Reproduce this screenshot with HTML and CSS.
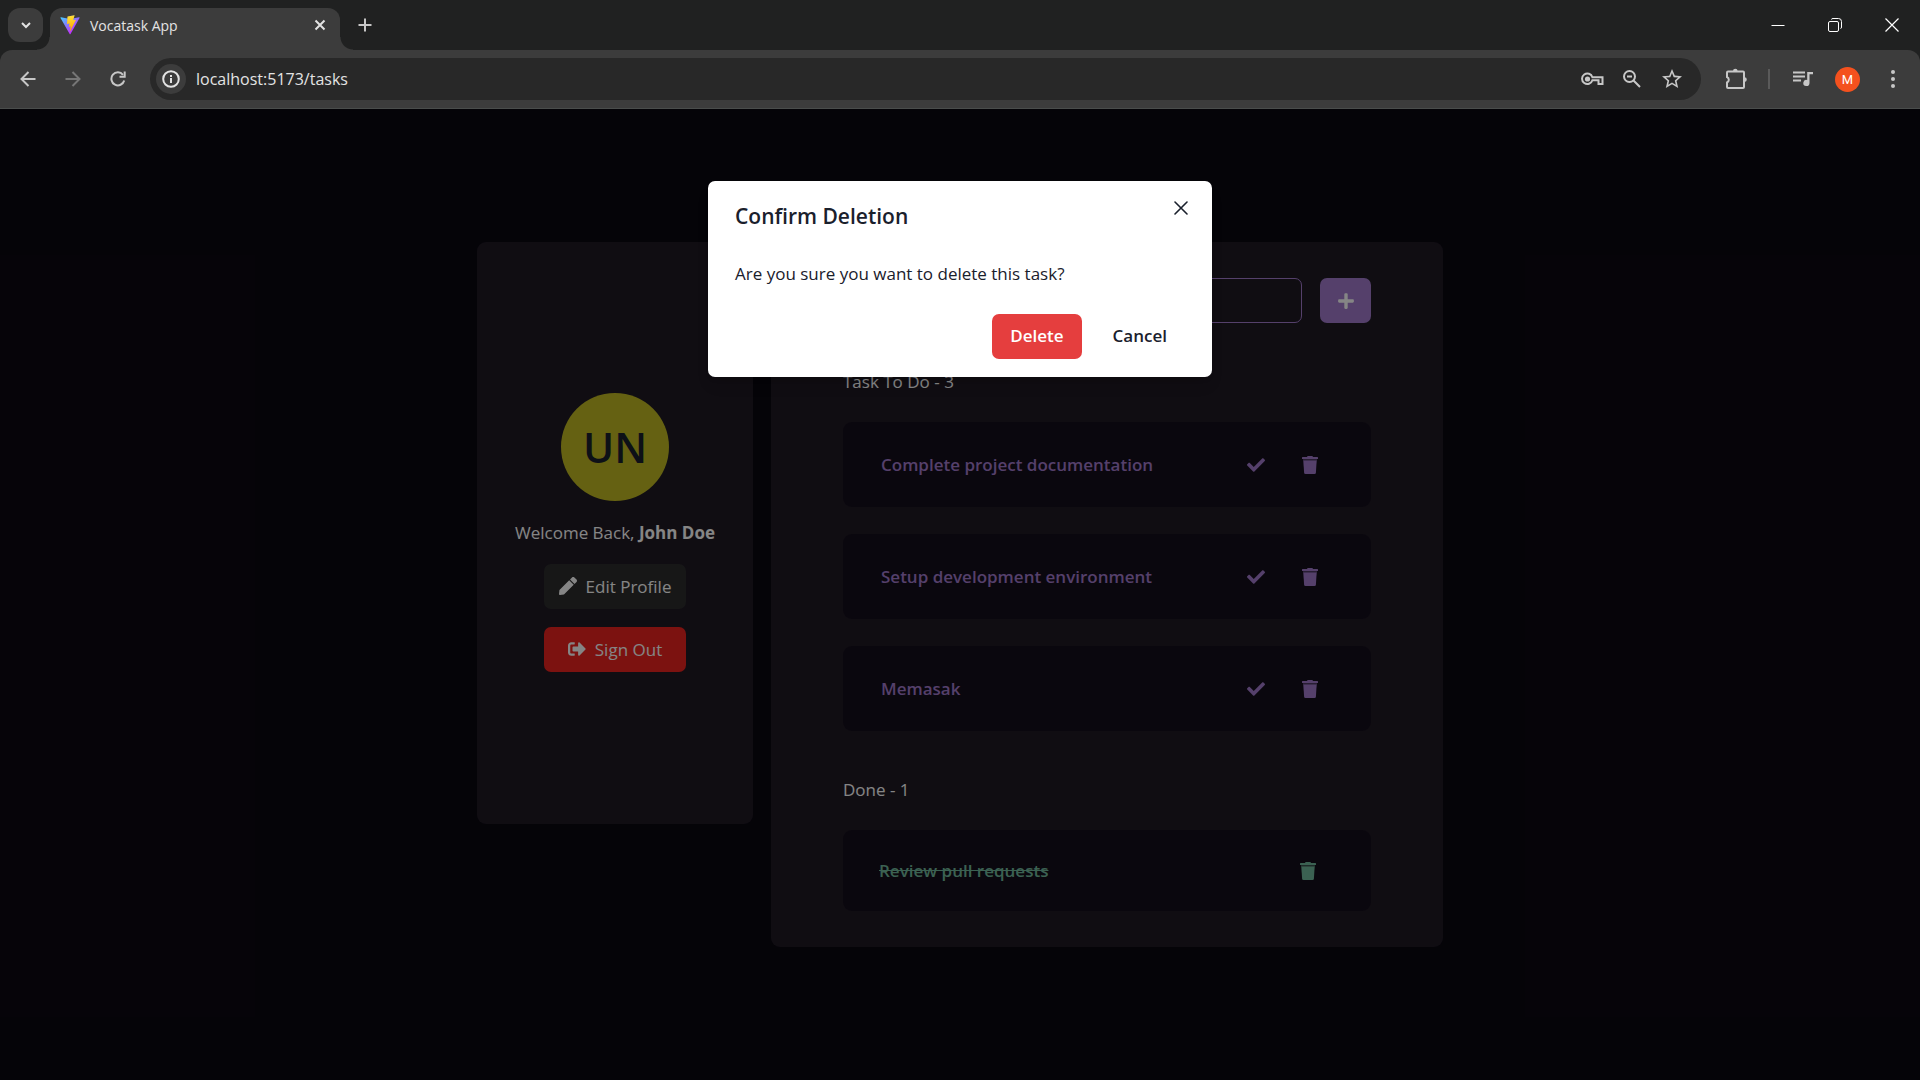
FILE: index.html
```html
<!DOCTYPE html>
<html lang="en">
<head>
<meta charset="utf-8">
<meta name="viewport" content="width=device-width, initial-scale=1">
<title>Vocatask App</title>
<link rel="stylesheet" href="styles.css">
</head>
<body>
<svg class="sprite" aria-hidden="true">
  <symbol id="check" viewBox="0 0 512 512"><path fill="currentColor" d="M173.898 439.404l-166.4-166.4c-9.997-9.997-9.997-26.206 0-36.204l36.203-36.204c9.997-9.998 26.207-9.998 36.204 0L192 312.69 432.095 72.596c9.997-9.997 26.207-9.997 36.204 0l36.203 36.204c9.997 9.997 9.997 26.206 0 36.204l-294.4 294.401c-9.998 9.997-26.207 9.997-36.204-.001z"/></symbol>
  <symbol id="trash" viewBox="0 0 18 18"><path fill="currentColor" d="M1.6 1H6l.6-1h4.8l.6 1h4.400q.6 0 .6.600V3H1V1.600Q1 1 1.600 1z"/><path fill="currentColor" opacity=".4" d="M2 3h14v2H2z"/><path fill="currentColor" d="M2.300 4.500h13.400l-.8 12.200q-.1 1.300-1.400 1.300H4.500q-1.300 0-1.400-1.300z"/></symbol>
</svg>

<header class="browser">
  <div class="tab-strip">
    <button class="tab-search" aria-label="Search tabs"><svg width="12" height="12" viewBox="0 0 12 12"><path d="M2 4l4 4 4-4" fill="none" stroke="currentColor" stroke-width="2"/></svg></button>
    <div class="tab">
      <svg class="favicon" width="20" height="20" viewBox="0 0 410 404"><defs><linearGradient id="va" x1="6" y1="33" x2="235" y2="344" gradientUnits="userSpaceOnUse"><stop stop-color="#41d1ff"/><stop offset="1" stop-color="#bd34fe"/></linearGradient><linearGradient id="vb" x1="194" y1="9" x2="236" y2="293" gradientUnits="userSpaceOnUse"><stop stop-color="#ffea83"/><stop offset=".083" stop-color="#ffdd35"/><stop offset="1" stop-color="#ffa800"/></linearGradient></defs><path fill="url(#va)" d="M399.641 59.525l-183.998 329.020c-3.799 6.793-13.559 6.833-17.415.073L10.582 59.556C6.380 52.190 12.680 43.267 21.028 44.759l184.195 32.923c1.175.21 2.378.208 3.553-.006l180.343-32.870c8.320-1.517 14.649 7.337 10.522 14.719z"/><path fill="url(#vb)" d="M292.965 1.574L156.801 28.255a5 5 0 00-4.030 4.611l-8.376 141.464c-.197 3.332 2.863 5.918 6.115 5.168l37.910-8.749c3.547-.818 6.752 2.306 6.023 5.873l-11.263 55.153c-.758 3.712 2.727 6.886 6.352 5.785l23.415-7.114c3.630-1.102 7.118 2.081 6.350 5.796l-17.899 86.633c-1.120 5.419 6.088 8.374 9.094 3.728l2.008-3.103L323.446 102.080c1.858-3.707-1.346-7.935-5.418-7.150l-39.022 7.532c-3.667.707-6.787-2.708-5.752-6.296l25.469-88.291c1.036-3.594-2.094-7.012-5.758-6.301z"/></svg>
      <span class="tab-title">Vocatask App</span>
      <button class="tab-close" aria-label="Close tab"><svg width="12" height="12" viewBox="0 0 12 12"><path d="M1.500 1.500l9 9M10.500 1.500l-9 9" stroke="currentColor" stroke-width="2"/></svg></button>
    </div>
    <button class="new-tab" aria-label="New tab"><svg width="14" height="14" viewBox="0 0 14 14"><path d="M7 .5v13M.5 7h13" stroke="currentColor" stroke-width="2"/></svg></button>
    <div class="window-controls">
      <button aria-label="Minimize"><svg width="14" height="14" viewBox="0 0 14 14"><path d="M.5 7.500h13" stroke="currentColor"/></svg></button>
      <button aria-label="Restore"><svg width="14" height="14" viewBox="0 0 14 14" fill="none" stroke="currentColor"><rect x=".5" y="3.500" width="10" height="10" rx="1.500"/><path d="M3.500 1.500Q3.500.500 5 .5h5.500q3 0 3 3V9q0 1.500-1 1.500"/></svg></button>
      <button aria-label="Close window"><svg width="14" height="14" viewBox="0 0 14 14"><path d="M.5.5l13 13M13.500.500l-13 13" stroke="currentColor" stroke-width="1.200"/></svg></button>
    </div>
  </div>
  <nav class="toolbar" aria-label="Browser toolbar">
    <button class="tool" aria-label="Back"><svg width="16" height="16" viewBox="0 0 16 16" fill="none" stroke="currentColor" stroke-width="2"><path d="M15.500 8H2M8.500 1L1.500 8l7 7"/></svg></button>
    <button class="tool" aria-label="Forward" disabled><svg width="16" height="16" viewBox="0 0 16 16" fill="none" stroke="currentColor" stroke-width="2"><path d="M.5 8H14M7.500 1l7 7-7 7"/></svg></button>
    <button class="tool" aria-label="Reload"><svg width="16" height="16" viewBox="0 0 16 16"><path d="M14.200 9.500A6.500 6.500 0 1 1 13 3.800" fill="none" stroke="currentColor" stroke-width="2"/><path d="M15.700.5v6.200H9.500v-2h4.200V.5z" fill="currentColor"/></svg></button>
    <div class="address">
      <button class="site-info" aria-label="Site information"><svg width="18" height="18" viewBox="0 0 18 18"><circle cx="9" cy="9" r="7.800" fill="none" stroke="currentColor" stroke-width="2"/><path d="M8 8h2v5H8zM8 5h2v2H8z" fill="currentColor"/></svg></button>
      <input class="url" aria-label="Address" value="localhost:5173/tasks">
      <button class="page-action" aria-label="Passwords"><svg width="24" height="24" viewBox="0 0 24 24"><g fill="none" stroke="currentColor" stroke-width="2"><path d="M12.400 10.200H22.500v6.800h-4v-3.700h-6.100A5.300 5.300 0 1 1 12.400 10.200z"/></g><circle cx="7.500" cy="12" r="2.600" fill="currentColor"/></svg></button>
      <button class="page-action" aria-label="Zoom"><svg width="20" height="20" viewBox="0 0 20 20" fill="none" stroke="currentColor" stroke-width="2"><circle cx="7.500" cy="7.500" r="5.500"/><path d="M11.500 11.500l6.500 6.500M5 7.500h5"/></svg></button>
      <button class="page-action" aria-label="Bookmark this page"><svg width="24" height="24" viewBox="0 0 24 24"><path fill="currentColor" d="M22 9.240l-7.190-.62L12 2 9.190 8.630 2 9.240l5.460 4.730L5.820 21 12 17.270 18.180 21l-1.630-7.030L22 9.240zM12 15.400l-3.760 2.270 1-4.280-3.320-2.880 4.380-.38L12 6.100l1.710 4.040 4.380.38-3.320 2.880 1 4.280L12 15.400z"/></svg></button>
    </div>
    <button class="tool" aria-label="Extensions"><svg width="22" height="22" viewBox="0 0 22 22"><path d="M2 4.500Q2 3.500 3 3.500h15q1 0 1 1V19q0 1-1 1H3q-1 0-1-1v-4.500a3 3 0 0 0 0-5.500z" fill="none" stroke="currentColor" stroke-width="2"/><path d="M8 3a2.300 2.300 0 0 1 4.600 0zM19.500 9.300a2.300 2.300 0 0 1 0 4.600z" fill="currentColor"/></svg></button>
    <span class="divider"></span>
    <button class="tool" aria-label="Media controls"><svg width="20" height="16" viewBox="0 0 20 16"><path d="M0 1h12M0 5h12M0 9h8" transform="translate(0 .5)" stroke="currentColor" stroke-width="2"/><path d="M14.200 1H20v2.200h-3.500V12a3.100 3.100 0 1 1-2.300-3z" fill="currentColor"/></svg></button>
    <button class="profile" aria-label="Profile">M</button>
    <button class="tool" aria-label="Menu"><svg width="4" height="18" viewBox="0 0 4 18" fill="currentColor"><circle cx="2" cy="2" r="2"/><circle cx="2" cy="9" r="2"/><circle cx="2" cy="16" r="2"/></svg></button>
  </nav>
</header>

<div class="viewport">
  <div class="app">
    <aside class="profile-card">
      <div class="avatar">UN</div>
      <p>Welcome Back, <strong>John Doe</strong></p>
      <button class="btn edit"><svg width="18" height="18" viewBox="0 0 512 512"><path fill="currentColor" d="M290.740 93.240l128.020 128.020-277.990 277.990-114.140 12.600C11.350 513.540-1.560 500.620.14 485.340l12.700-114.220 277.900-277.880zm207.200-19.060l-60.110-60.110c-18.750-18.750-49.160-18.750-67.910 0l-56.550 56.550 128.020 128.020 56.550-56.550c18.750-18.760 18.750-49.160 0-67.910z"/></svg>Edit Profile</button>
      <button class="btn sign-out"><svg width="18" height="18" viewBox="0 0 512 512"><path fill="currentColor" d="M497 273L329 441c-15 15-41 4.500-41-17v-96H152c-13.300 0-24-10.700-24-24v-96c0-13.300 10.700-24 24-24h136V88c0-21.400 25.900-32 41-17l168 168c9.300 9.400 9.300 24.600 0 34zM192 436v-40c0-6.600-5.400-12-12-12H96c-17.700 0-32-14.300-32-32V160c0-17.700 14.300-32 32-32h84c6.600 0 12-5.400 12-12V76c0-6.600-5.400-12-12-12H96c-53 0-96 43-96 96v192c0 53 43 96 96 96h84c6.600 0 12-5.400 12-12z"/></svg>Sign Out</button>
    </aside>

    <main class="tasks">
      <form class="new-task">
        <input aria-label="New task">
        <button type="button" class="btn add" aria-label="Add task"><svg width="16" height="18" viewBox="0 0 448 512"><path fill="currentColor" d="M416 208H272V64c0-17.670-14.330-32-32-32h-32c-17.670 0-32 14.330-32 32v144H32c-17.670 0-32 14.330-32 32v32c0 17.670 14.330 32 32 32h144v144c0 17.670 14.330 32 32 32h32c17.670 0 32-14.330 32-32V304h144c17.670 0 32-14.330 32-32v-32c0-17.670-14.330-32-32-32z"/></svg></button>
      </form>
      <section class="group">
        <h2>Task To Do - 3</h2>
        <ul>
          <li class="task"><span>Complete project documentation</span><button aria-label="Mark done"><svg width="18" height="18"><use href="#check"/></svg></button><button aria-label="Delete task"><svg width="18" height="18"><use href="#trash"/></svg></button></li>
          <li class="task"><span>Setup development environment</span><button aria-label="Mark done"><svg width="18" height="18"><use href="#check"/></svg></button><button aria-label="Delete task"><svg width="18" height="18"><use href="#trash"/></svg></button></li>
          <li class="task"><span>Memasak</span><button aria-label="Mark done"><svg width="18" height="18"><use href="#check"/></svg></button><button aria-label="Delete task"><svg width="18" height="18"><use href="#trash"/></svg></button></li>
        </ul>
      </section>
      <section class="group">
        <h2>Done - 1</h2>
        <ul>
          <li class="task done"><span>Review pull requests</span><button aria-label="Delete task"><svg width="18" height="18"><use href="#trash"/></svg></button></li>
        </ul>
      </section>
    </main>
  </div>

  <div class="overlay">
    <div class="modal" role="alertdialog" aria-modal="true" aria-labelledby="modal-title">
      <h1 id="modal-title">Confirm Deletion</h1>
      <button class="modal-close" aria-label="Close"><svg width="14" height="14" viewBox="0 0 14 14"><path d="M1 1l12 12M13 1L1 13" stroke="currentColor" stroke-width="1.600" stroke-linecap="round"/></svg></button>
      <p>Are you sure you want to delete this task?</p>
      <footer>
        <button class="btn danger">Delete</button>
        <button class="btn ghost">Cancel</button>
      </footer>
    </div>
  </div>
</div>
</body>
</html>
```
FILE: styles.css
```css
* { box-sizing: border-box; }

body {
  margin: 0;
  min-height: 100vh;
  display: flex;
  flex-direction: column;
  background: #0b0811;
  color: #fff;
  font: 17px/27px "Open Sans", "Noto Sans", sans-serif;
}

h1, h2, p, ul { margin: 0; padding: 0; }
ul { list-style: none; }

button, input {
  font: inherit;
  color: inherit;
  background: none;
  border: 0;
  padding: 0;
}

button {
  display: flex;
  align-items: center;
  justify-content: center;
  flex: none;
}

svg { display: block; flex: none; }
.sprite { position: absolute; width: 0; height: 0; }

/* Browser frame */
.browser {
  background: #202121;
  border-bottom: 1px solid #4a4d4c;
  color: #c7c7c7;
}

.tab-strip {
  display: flex;
  height: 50px;
  padding: 8px 0 0 8px;
}

.tab-search {
  width: 35px;
  height: 34px;
  border-radius: 12px;
  background: #3c3c3c;
  color: #e3e3e3;
}

.tab {
  position: relative;
  display: flex;
  align-items: center;
  gap: 10px;
  width: 290px;
  margin-left: 7px;
  padding: 0 12px 8px 10px;
  border-radius: 12px 12px 0 0;
  background: #3c3c3c;
  color: #e3e3e3;
}

.tab::before, .tab::after {
  content: "";
  position: absolute;
  bottom: 0;
  width: 13px;
  height: 13px;
}

.tab::before { right: 100%; background: radial-gradient(circle at 0 0, transparent 12px, #3c3c3c 13px); }
.tab::after { left: 100%; background: radial-gradient(circle at 100% 0, transparent 12px, #3c3c3c 13px); }

.tab-title { flex: 1; font-size: 14px; }
.tab-close { width: 16px; height: 16px; }
.new-tab { width: 34px; height: 34px; margin-left: 8px; }

.window-controls {
  display: flex;
  margin: -8px 0 0 auto;
  color: #fff;
}

.window-controls button { width: 57px; }

.toolbar {
  display: flex;
  align-items: center;
  height: 58px;
  padding: 0 5px;
  border-radius: 12px 12px 0 0;
  background: #3c3c3c;
}

.tool { width: 45px; height: 42px; }
.tool:disabled { color: #767676; }

.address {
  flex: 1;
  display: flex;
  align-items: center;
  height: 42px;
  margin: 0 12px 0 10px;
  padding: 0 9px 0 6px;
  border-radius: 21px;
  background: #282828;
}

.site-info {
  width: 30px;
  height: 30px;
  border-radius: 50%;
  background: #3c3c3c;
  color: #e3e3e3;
}

.url {
  flex: 1;
  min-width: 0;
  margin-left: 10px;
  color: #e3e3e3;
  font-size: 16px;
}

.page-action { width: 40px; }

.divider {
  width: 2px;
  height: 20px;
  margin: 0 10px;
  background: #5a5a5a;
}

.profile {
  width: 25px;
  height: 25px;
  margin: 0 10px;
  border-radius: 50%;
  background: #f4511e;
  color: #fff;
  font: 13px/25px Roboto, sans-serif;
}

/* Application */
.viewport {
  position: relative;
  flex: 1;
  padding: 133px 24px;
  border-bottom: 2px solid #000;
}

.app {
  display: flex;
  align-items: flex-start;
  justify-content: center;
  gap: 18px;
}

.profile-card, .tasks {
  border-radius: 9px;
  background: #1f1924;
}

.profile-card {
  display: flex;
  flex-direction: column;
  align-items: center;
  justify-content: center;
  gap: 18px;
  flex: 0 0 276px;
  min-height: 582px;
  padding-bottom: 2px;
}

.avatar {
  display: grid;
  place-items: center;
  width: 108px;
  height: 108px;
  border-radius: 50%;
  background: #c2bb23;
  color: #1a202c;
  font-size: 42px;
  font-weight: 600;
}

.btn {
  height: 45px;
  padding: 0 18px;
  border-radius: 7px;
}

.edit, .sign-out { width: 142px; padding: 0; gap: 9px; }
.edit { background: #2d2d2d; }
.sign-out { background: #ee231f; }

.tasks {
  flex: 0 1 672px;
  display: flex;
  flex-direction: column;
  gap: 45px;
  padding: 36px 72px;
}

.new-task { display: flex; gap: 18px; }

.new-task input {
  flex: 1;
  min-width: 0;
  height: 45px;
  padding: 0 18px;
  border: 1px solid #a37bce;
  border-radius: 7px;
}

.add { width: 51px; padding: 0; background: #a37bce; }

.group h2 { font-size: 17px; font-weight: 400; line-height: 27px; }

.group ul {
  display: flex;
  flex-direction: column;
  gap: 27px;
  margin-top: 27px;
}

.task {
  display: flex;
  align-items: center;
  padding: 18px 32px 18px 36px;
  border: 2px solid transparent;
  border-radius: 9px;
  background: #150f1c;
  color: #a37bce;
  font-weight: 600;
}

.task span { flex: 1; }
.task button { width: 54px; height: 45px; }

.done { padding-right: 36px; border: 0; color: #72bb9e; }
.done span { text-decoration: line-through; }

/* Confirmation dialog */
.overlay {
  position: absolute;
  inset: 0;
  padding-top: 72px;
  background: rgba(0, 0, 0, 0.48);
}

.modal {
  position: relative;
  max-width: 504px;
  margin: 0 auto;
  border-radius: 7px;
  background: #fff;
  color: #1a202c;
  box-shadow: 0 10px 15px -3px rgba(0, 0, 0, 0.1), 0 4px 6px -2px rgba(0, 0, 0, 0.05);
}

.modal h1 {
  padding: 18px 27px;
  font-size: 21px;
  font-weight: 600;
  line-height: 34px;
}

.modal p { padding: 9px 27px; }

.modal-close {
  position: absolute;
  top: 9px;
  right: 13px;
  width: 36px;
  height: 36px;
}

.modal footer {
  display: flex;
  justify-content: flex-end;
  gap: 13px;
  padding: 18px 27px;
}

.danger, .ghost { padding-bottom: 2px; font-weight: 600; }
.danger { background: #e53e3e; color: #fff; }
```
